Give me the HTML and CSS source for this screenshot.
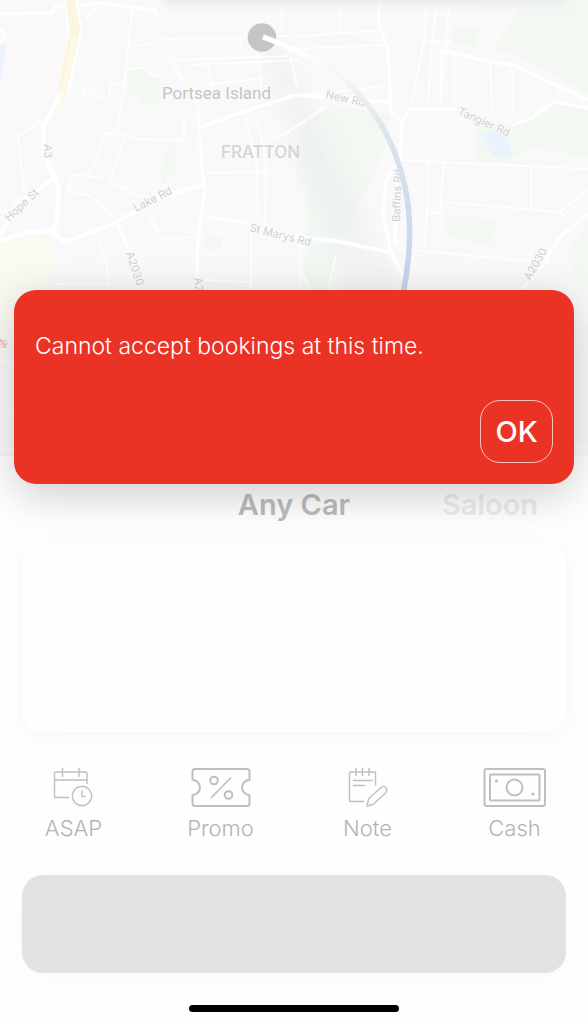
FILE: index.html
```html
<!DOCTYPE html>
<html lang="en">
<head>
<meta charset="utf-8">
<meta name="viewport" content="width=device-width, initial-scale=1">
<title>Book a ride</title>
<link rel="stylesheet" href="styles.css">
</head>
<body>
<main class="screen">
  <section class="map" aria-label="Route map">
    <svg class="map-art" viewBox="0 0 588 456" preserveAspectRatio="xMidYMin slice">
      <defs>
        <linearGradient id="route" gradientUnits="userSpaceOnUse" x1="300" y1="50" x2="410" y2="270">
          <stop offset="0" stop-color="#ffffff"/>
          <stop offset="0.2" stop-color="#f2f3f7"/>
          <stop offset="0.5" stop-color="#dbe2eb"/>
          <stop offset="1" stop-color="#c5d5ec"/>
        </linearGradient>
        <linearGradient id="topshade" x1="0" y1="0" x2="0" y2="1">
          <stop offset="0" stop-color="#f1f1f3"/>
          <stop offset="1" stop-color="#f9f9f9" stop-opacity="0"/>
        </linearGradient>
        <filter id="soft" x="-50%" y="-20%" width="200%" height="140%"><feGaussianBlur stdDeviation="9"/></filter>
        <filter id="softer" x="-20%" y="-100%" width="140%" height="300%"><feGaussianBlur stdDeviation="5"/></filter>
      </defs>
      <rect width="588" height="456" fill="#f9f9f9"/>
      <path fill="#faf8f9" d="M0 0H72L65 60 42 130 50 185 5 235H0Z"/>
      <path fill="#e9f2fe" d="M0 43 6 47 0 82Z"/>
      <path fill="#fafaf3" d="M0 238 50 234 55 268 42 290 0 360Z"/>
      <g fill="#f3f8f3">
        <path d="M128 69H143L149 76 159 79 160 105H145L128 90Z"/>
        <path d="M168 144H177V172L162 184 161 170Z"/>
        <path d="M205 237H222V250H205Z"/>
        <path d="M330 105 390 113 386 145 348 235 306 237 307 190 296 175 300 130Z"/>
        <path d="M308 243 343 247 328 290H313L303 270Z"/>
        <path d="M524 0H588V93L550 72 515 54 493 51Z"/>
        <path d="M454 26 480 28 476 48 451 42Z"/>
        <path d="M475 128 510 125 556 103 588 108V158L530 147 510 162H474Z"/>
        <path d="M447 214 496 219 493 246 445 236Z"/>
        <path d="M588 225 568 250 572 275 588 290Z"/>
      </g>
      <path fill="#faf8f8" d="M482 0H524L493 51 480 46ZM388 145 395 165 384 225 352 218Z"/>
      <path fill="#eaf2fd" d="M480 132 506 130 511 157 493 156Z"/>
      <path d="M259 45 280 38 400 290H345Z" fill="#dfe0e3" opacity=".25" filter="url(#soft)"/>
      <g fill="none" stroke="#fff" stroke-width="1.6">
        <path d="M132 7 125 80 117 134M85 20 98 7M130 47 158 42M129 69 147 68M147 68 150 75 165 76M82 100 85 89 94 90 97 98 108 99 111 84 125 86M42 121 18 136 24 190M101 132 117 134 137 139 184 140M105 134 89 175M124 139 109 181 148 200M68 174 85 176 104 178M68 190 90 196 115 218M72 175 68 190M148 214 163 240 198 236M97 240 106 260 109 284H55M184 119V140M158 39 240 38 288 36M173 60 288 56M190 65 300 60M205 85 262 78M208 67 212 88M241 38V50M282 0V30M257 50 262 90M288 45 297 88M245 118 256 160 258 220M257 118 266 160 265 225M208 173 268 172M251 225V290M205 280 251 282"/>
        <path d="M340 0V32M290 37 340 33 377 31M290 49 384 45M288 95 335 92 385 86M270 140 285 134 326 106M427 0 424 40 411 108M437 0 432 45 428 105M450 0 445 45 440 107M424 40 450 42 445 48M441 51V105M454 53V105M490 62 492 115M512 65 513 115M560 87 556 99M429 160 427 213M444 162 440 213H429M427 213 424 248M444 202 560 212 588 190M531 166V208M560 212 568 220M400 160 588 169M401 249 550 263M336 255 328 290M300 245V290M300 270 310 290"/>
        <path stroke-width="1.4" stroke="#f3f4f5" d="M288 82 322 145 365 250 380 290"/>
      </g>
      <g fill="none" stroke="#fff" stroke-width="3.400" stroke-linejoin="round">
        <path d="M0 14 52 13 55 7 80 4M80 6 98 3 155 10M155 10 160 38 178 72 196 96 202 170 205 188 198 240 196 300M201 127 240 113 296 95 388 102"/>
        <path stroke-width="4.500" d="M60 95 43 127 44 155 54 175 59 190 56 225 52 232M0 241 28 232 50 231 66 242 115 223 160 198 205 184"/>
        <path d="M54 178 35 192 18 202M0 236 18 202M0 44 5 34 0 30M117 224 128 248M206 216 250 224 280 235 336 241 390 252 403 275M379 0V25L388 50 391 113 402 121 410 109 455 109M402 121 400 160 386 180 383 215 390 248 400 270M397 165 395 245M441 50 490 62 513 65 588 100M511 125 530 119 554 102 588 108M588 214 560 237 545 260M543 265 521 290"/>
        <path stroke-width="2" stroke-opacity=".6" d="M0 334H18M0 361 18 365M0 411 18 417M0 449H18M568 330 588 320M570 446H588"/>
      </g>
      <g fill="none">
        <path stroke="#fff" stroke-width="14" d="M71 0 75 32 63 90"/>
        <path stroke="#fcf5e0" stroke-width="10" d="M70 0 75 30 62 90"/>
        <path stroke="#fdf8e7" stroke-width="5" d="M75 35 61 107"/>
        <path stroke="#fdfaf3" stroke-width="4" d="M155 15 161 40 195 95 198 155"/>
      </g>
      <g class="road-labels">
        <text transform="translate(44 144) rotate(90)">A3</text>
        <text transform="translate(9 222) rotate(-43)">Hope St</text>
        <text transform="translate(136 212) rotate(-27)">Lake Rd</text>
        <text transform="translate(126 253) rotate(72)">A2030</text>
        <text transform="translate(194 278) rotate(82)">A2030</text>
        <text transform="translate(249 231) rotate(14)">St Marys Rd</text>
        <text transform="translate(325 98) rotate(12)">New Rd</text>
        <text transform="translate(400 222) rotate(-88)">Baffins Rd</text>
        <text transform="translate(457 114) rotate(24)">Tangier Rd</text>
        <text transform="translate(530 281) rotate(-60)">A2030</text>
      </g>
      <text class="place" x="162" y="99">Portsea Island</text>
      <text class="district" x="221" y="158">FRATTON</text>
      <path d="M0 341H7M0 344H8M1 347H6M0 339 6 347" fill="none" stroke="#f0b5b5" stroke-width="1.200"/>
      <rect x="165" y="-10" width="400" height="14" fill="#e6e6e9" filter="url(#softer)"/>
      <rect x="165" width="400" height="14" fill="url(#topshade)" opacity=".3"/>
      <circle cx="262" cy="37.500" r="14.300" fill="#c5c5c5"/>
      <path d="M263 37C295 48 335 68 357 92 380 117 397 150 405 187 412 220 411 255 403 294" fill="none" stroke="url(#route)" stroke-width="5.500"/>
    </svg>
  </section>

  <nav class="cars" aria-label="Car type">
    <button class="car car-current" type="button" aria-pressed="true">Any Car</button>
    <button class="car" type="button">Saloon</button>
  </nav>

  <section class="quote" aria-label="Quote"></section>

  <div class="options">
    <button class="option" type="button">
      <svg class="icon" width="64" height="42" viewBox="0 0 64 42"><path d="M45 17V6.500Q45 5 43.500 5H14Q12.500 5 12.500 6.500V30.500H27M12.500 13H45M20.500 1V10M37 1V10"/><circle cx="40" cy="29" r="9.700"/><path d="M40 23.500V29.500H43.500"/></svg>
      <span>ASAP</span>
    </button>
    <button class="option" type="button">
      <svg class="icon icon-bold" width="64" height="42" viewBox="0 0 64 42"><path d="M6 2H58Q60.500 2 60.500 4.500V13A7.500 7.500 0 0 0 60.500 28V36.500Q60.500 39 58 39H6Q3.500 39 3.500 36.500V28A7.500 7.500 0 0 0 3.500 13V4.500Q3.500 2 6 2Z"/><path d="M22 31 42 10.500" stroke-width="1.600"/><circle cx="25" cy="13.500" r="3.800"/><circle cx="39.500" cy="28" r="3.800"/></svg>
      <span>Promo</span>
    </button>
    <button class="option" type="button">
      <svg class="icon" width="64" height="42" viewBox="0 0 64 42"><path d="M39.500 18.500V6Q39.500 5 38.500 5H14.500Q13.500 5 13.500 6V33Q13.500 34.500 15 34.500H28M20 1V9M26.500 1V9M33 1V9M17 13.500H37M17 18.500H29M31 39 32.500 32 45 20.500Q48 18 50 21 52 23 49.500 26L37 37.500Z"/></svg>
      <span>Note</span>
    </button>
    <button class="option" type="button">
      <svg class="icon icon-bold" width="64" height="42" viewBox="0 0 64 42"><rect x="1.500" y="2" width="60.500" height="37" rx="2"/><rect x="7" y="7.500" width="49.500" height="26" rx="1"/><circle cx="31.500" cy="20.500" r="8"/><circle class="dot" cx="13.500" cy="14" r="1.600"/><circle class="dot" cx="50" cy="27" r="1.600"/></svg>
      <span>Cash</span>
    </button>
  </div>

  <button class="book" type="button" aria-label="Book" disabled></button>
  <div class="home-bar"></div>

  <div class="overlay">
    <section class="alert" role="alertdialog" aria-modal="true" aria-labelledby="alert-text">
      <p class="alert-text" id="alert-text">Cannot accept bookings at this time.</p>
      <button class="ok" type="button">OK</button>
    </section>
  </div>
</main>
</body>
</html>
```

FILE: styles.css
```css
* {
  box-sizing: border-box;
}

body {
  margin: 0;
  background: #fefefe;
  font-family: Inter, "Liberation Sans", sans-serif;
}

button {
  margin: 0;
  padding: 0;
  border: 0;
  background: none;
  font: inherit;
  color: inherit;
}

.screen {
  position: relative;
  display: flex;
  flex-direction: column;
  min-height: 100vh;
  overflow: hidden;
}

.map {
  height: 456px;
}

.map-art {
  display: block;
  width: 100%;
  height: 100%;
  font-family: Inter, sans-serif;
}

.road-labels {
  font-size: 11px;
  fill: #cfd0d4;
  stroke: #fbfbfb;
  stroke-width: 2px;
  paint-order: stroke;
}

.place {
  font-family: Roboto, sans-serif;
  font-size: 17px;
  fill: #c5c5c4;
}

.district {
  font-size: 17px;
  font-weight: 500;
  fill: #d3d5d9;
}

.cars {
  display: grid;
  grid-template-columns: repeat(3, 1fr);
  height: 86px;
  padding-top: 28px;
}

.car {
  height: 40px;
  font-size: 29px;
  font-weight: 600;
  color: #ececed;
}

.car-current {
  grid-column: 2;
  color: #bbb;
}

.quote {
  height: 190px;
  margin: 0 22px;
  border-radius: 20px;
  background: #fefefe;
  box-shadow: 0 4px 20px rgba(0, 0, 0, 0.04);
}

.options {
  display: grid;
  grid-template-columns: repeat(4, 1fr);
  padding: 35px 0 34px;
}

.option {
  display: flex;
  flex-direction: column;
  align-items: center;
  gap: 6px;
  font-size: 22px;
  font-weight: 300;
  line-height: 26px;
  color: #b4b4b4;
}

.icon {
  fill: none;
  stroke: #bfbfbf;
  stroke-width: 1.4;
  stroke-linejoin: round;
}

.icon-bold {
  stroke-width: 2;
}

.dot {
  fill: #bfbfbf;
  stroke: none;
}

.book {
  height: 98px;
  margin: 0 22px;
  border-radius: 21px;
  background: #e2e2e2;
  box-shadow: 0 4px 20px rgba(0, 0, 0, 0.02);
}

.home-bar {
  width: 210px;
  height: 7px;
  margin: 32px auto 12px;
  border-radius: 4px;
  background: #000;
}

.overlay {
  position: absolute;
  inset: 0;
  padding: 290px 14px 0;
}

.alert {
  display: flex;
  flex-direction: column;
  justify-content: space-between;
  min-height: 194px;
  padding: 42px 21px 21px;
  border-radius: 22px;
  background: #ea3325;
  box-shadow: 0 10px 44px rgba(0, 0, 0, 0.2);
  color: #fff;
}

.alert-text {
  margin: 0;
  font-size: 23px;
  font-weight: 300;
  line-height: 28px;
}

.ok {
  align-self: flex-end;
  width: 73px;
  height: 63px;
  border: 1px solid #f9c5c0;
  border-radius: 20px;
  font-size: 29px;
  font-weight: 500;
}
```
